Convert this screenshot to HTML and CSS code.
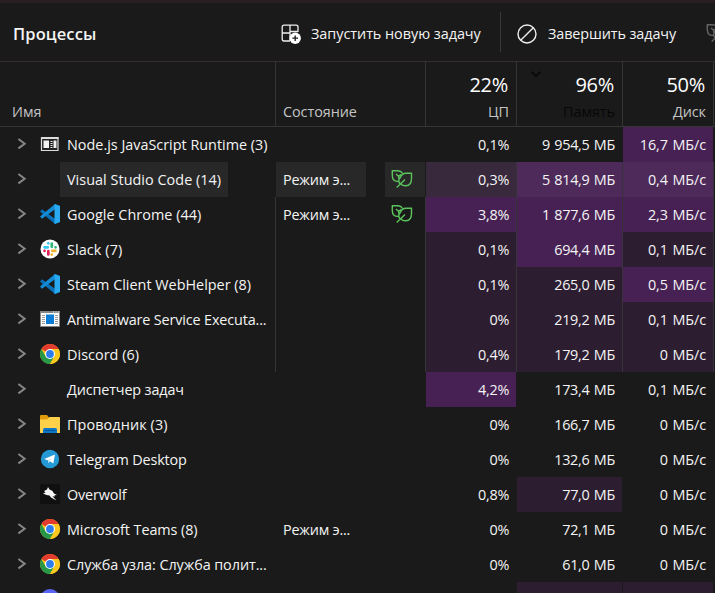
FILE: index.html
```html
<!DOCTYPE html>
<html lang="ru">
<head>
<meta charset="utf-8">
<title>Процессы</title>
<link rel="stylesheet" href="styles.css">
</head>
<body>
<svg class="defs" aria-hidden="true">
  <symbol id="chev" viewBox="0 0 10 12"><path d="M1.400 1 7.700 5.700 1.400 10.400" fill="none" stroke="#858585" stroke-width="2"/></symbol>
  <symbol id="leaf" viewBox="0 0 22 20"><path d="M8 12.300C3.500 13 1.300 10.500 1.300 6.500V1.700H6.500Q10 1.700 11.300 4.300M5 5 7.700 7.500V9.500M7.700 7.500 9.800 5.500M9 15C7 12.500 7.800 10 9.500 8.300 10.500 5.500 12.500 4.300 15 4.300H20.500V9.500C20.500 14 18.500 16.700 15 16.700Q12 17 9.800 15M5.700 18.600 14 10.500" fill="none" stroke="currentColor" stroke-width="1.400" stroke-linejoin="round"/></symbol>
  <symbol id="vscode" viewBox="0 0 20 20"><path d="M15 0 20 2V18L15 20 0 7.400 2 5.200 15 14.800Z" fill="#0870b8"/><path d="M15 0 0 12.600 2 14.800 15 5.200Z" fill="#128bd4"/><path d="M14.500 0 20 2V18L14.500 20Z" fill="#29a9f2"/></symbol>
  <symbol id="chrome" viewBox="0 0 20 20"><circle cx="10" cy="10" r="10" fill="#fcc81d"/><path d="M10 10 1.340 5A10 10 0 0 1 18.660 5Z" fill="#e33b2e"/><path d="M1.340 5A10 10 0 0 0 10 20L14.300 12.500 10 10 5.700 12.500Z" fill="#279847"/><path d="M10 5H18.660A10 10 0 0 1 10 20L14.300 12.500Z" fill="#fcc81d"/><circle cx="10" cy="10" r="5" fill="#fff"/><circle cx="10" cy="10" r="3.900" fill="#2f7ced"/></symbol>
  <symbol id="slack" viewBox="0 0 20 20"><circle cx="10" cy="10" r="9.500" fill="#fff"/><g fill="none" stroke-width="2.700" stroke-linecap="round"><path d="M4.500 8.300H7.800M8.300 4.300V4.400" stroke="#36c5f0"/><path d="M11.800 4.500V7.800M15.500 8.300H15.600" stroke="#2eb67d"/><path d="M15.500 11.800H12.200M11.800 15.500V15.600" stroke="#ecb22e"/><path d="M8.300 15.500V12.200M4.500 11.800H4.600" stroke="#e01e5a"/></g></symbol>
  <symbol id="node" viewBox="0 0 20 20"><path d="M1.500 3.500H18V16.500H1.500Z" fill="#222" stroke="#ddd" stroke-width="1.200"/><path d="M1 3H18.500V5H1Z" fill="#ddd"/><path d="M3.500 6.500H9V14H3.500Z" fill="#f2f2f2"/><path d="M10.500 7.500H12.500M10.500 9.500H12.500M10.500 11.500H12.500M10.500 13.500H12.500" stroke="#eee"/><path d="M13.500 6.500H16.500V14H13.500Z" fill="#eee"/></symbol>
  <symbol id="exe" viewBox="0 0 20 20"><path d="M.5 2.500H19.500V17.500H.5Z" fill="#fafafa" stroke="#858585"/><path d="M0 2H20V4H0Z" fill="#858585"/><path d="M13 3H14M15.500 3H16.500M18 3H19" stroke="#eee"/><path d="M6 5.500H14V15H6Z" fill="#0c7cd5"/><path d="M2 6.500H5M2 8.500H5M2 10.500H5M2 12.500H5M2 14.500H5M15 6.500H18M15 8.500H18M15 10.500H18M15 12.500H18M15 14.500H18" stroke="#9a9a9a"/></symbol>
  <symbol id="folder" viewBox="0 0 20 20"><path d="M0 2Q0 1 1 1H7L9 3.500V6H0Z" fill="#e09c0b"/><path d="M0 5.500H7L9.500 3H19Q20 3 20 4V19H0Z" fill="#ffd04a"/><path d="M3 19V15.500Q3 14 4.500 14H15.500Q17 14 17 15.500V19Z" fill="#0c78c9"/><path d="M5 16.500H15" stroke="#07528d"/></symbol>
  <symbol id="telegram" viewBox="0 0 20 20"><circle cx="10" cy="10" r="9.200" fill="#2499d5"/><path d="M4.200 10 15 5.600 13.300 14.500 10 12.300 8.300 14V11.500Z" fill="#fff"/><path d="M8.300 11.500 12.500 8 9.300 12 8.300 14Z" fill="#b9dced"/></symbol>
  <symbol id="wolf" viewBox="0 0 20 20"><path d="M0 0H20V20H0Z" fill="#101010"/><path d="M8 3 9.500 5.500 12.500 7 14 9.500 17 11 14.500 11.200 15 12.500 12.500 12.200 16.500 16.500 11 13.500 9.500 11.500 6.500 11 3 9.500 5.500 8.500 4 7 7 5.500Z" fill="#f5f5f5"/></symbol>
  <symbol id="blurple" viewBox="0 0 20 20"><circle cx="10" cy="10" r="10" fill="#5865f2"/></symbol>
</svg>
<header class="toolbar">
  <h1><span class="t">Процессы</span></h1>
  <div class="action run">
    <svg class="i-run" viewBox="0 0 20 20"><path d="M9 17H3Q1.200 17 1.200 15V3Q1.200 1.200 3 1.200H15Q17 1.200 17 3V8M9 1.200V17M1.200 9H9M9 7.500H17" fill="none" stroke="#eee" stroke-width="1.300"/><circle cx="14.200" cy="14.200" r="5.700" fill="#fff"/><path d="M11.400 14.200H17M14.200 11.400V17" stroke="#1a1a1a" stroke-width="1.300"/></svg>
    <span class="t">Запустить новую задачу</span>
  </div>
  <div class="action end">
    <svg class="i-end" viewBox="0 0 20 20"><circle cx="10" cy="10" r="9" fill="none" stroke="#eee" stroke-width="1.400"/><path d="M3.700 16.300 16.300 3.700" stroke="#eee" stroke-width="1.400"/></svg>
    <span class="t">Завершить задачу</span>
  </div>
  <svg class="i-eff"><use href="#leaf"/></svg>
</header>
<div class="row head">
  <div class="c name"><span class="t">Имя</span></div>
  <div class="c state"><span class="t">Состояние</span></div>
  <div class="c num"><b>22%</b><span class="t">ЦП</span></div>
  <div class="c num sorted"><svg class="i-sort" viewBox="0 0 10 6"><path d="M.7.700 5 5 9.300.700" fill="none" stroke="#050505" stroke-width="1.300"/></svg><b>96%</b><span class="t">Память</span></div>
  <div class="c num"><b>50%</b><span class="t">Диск</span></div>
</div>
<main>
  <div class="row"><div class="c name"><svg class="chev"><use href="#chev"/></svg><svg class="app"><use href="#node"/></svg><span class="t wide">Node.js JavaScript Runtime (3)</span></div><div class="c state"></div><div class="c num">0,1%</div><div class="c num">9 954,5 МБ</div><div class="c num disk hi">16,7 МБ/с</div></div>
  <div class="row lined hover"><div class="c name"><svg class="chev"><use href="#chev"/></svg><span class="app"></span><span class="t wider">Visual Studio Code (14)</span></div><div class="c state"><span class="mode">Режим э...</span><span class="eco"><svg><use href="#leaf"/></svg></span></div><div class="c num lo">0,3%</div><div class="c num hi">5 814,9 МБ</div><div class="c num disk hi">0,4 МБ/с</div></div>
  <div class="row lined"><div class="c name"><svg class="chev"><use href="#chev"/></svg><svg class="app"><use href="#vscode"/></svg><span class="t wider">Google Chrome (44)</span></div><div class="c state"><span class="mode">Режим э...</span><span class="eco"><svg><use href="#leaf"/></svg></span></div><div class="c num hi">3,8%</div><div class="c num hi">1 877,6 МБ</div><div class="c num disk hi">2,3 МБ/с</div></div>
  <div class="row lined"><div class="c name"><svg class="chev"><use href="#chev"/></svg><svg class="app"><use href="#slack"/></svg><span class="t widest">Slack (7)</span></div><div class="c state"></div><div class="c num lo">0,1%</div><div class="c num hi">694,4 МБ</div><div class="c num disk lo">0,1 МБ/с</div></div>
  <div class="row lined"><div class="c name"><svg class="chev"><use href="#chev"/></svg><svg class="app"><use href="#vscode"/></svg><span class="t wide">Steam Client WebHelper (8)</span></div><div class="c state"></div><div class="c num lo">0,1%</div><div class="c num lo">265,0 МБ</div><div class="c num disk hi">0,5 МБ/с</div></div>
  <div class="row lined"><div class="c name"><svg class="chev"><use href="#chev"/></svg><svg class="app"><use href="#exe"/></svg><span class="t snug">Antimalware Service Executa...</span></div><div class="c state"></div><div class="c num lo">0%</div><div class="c num lo">219,2 МБ</div><div class="c num disk lo">0,1 МБ/с</div></div>
  <div class="row lined"><div class="c name"><svg class="chev"><use href="#chev"/></svg><svg class="app"><use href="#chrome"/></svg><span class="t wider">Discord (6)</span></div><div class="c state"></div><div class="c num lo">0,4%</div><div class="c num lo">179,2 МБ</div><div class="c num disk lo">0 МБ/с</div></div>
  <div class="row"><div class="c name"><svg class="chev"><use href="#chev"/></svg><span class="app"></span><span class="t snug">Диспетчер задач</span></div><div class="c state"></div><div class="c num hi">4,2%</div><div class="c num">173,4 МБ</div><div class="c num disk">0,1 МБ/с</div></div>
  <div class="row"><div class="c name"><svg class="chev"><use href="#chev"/></svg><svg class="app"><use href="#folder"/></svg><span class="t widest">Проводник (3)</span></div><div class="c state"></div><div class="c num">0%</div><div class="c num">166,7 МБ</div><div class="c num disk">0 МБ/с</div></div>
  <div class="row"><div class="c name"><svg class="chev"><use href="#chev"/></svg><svg class="app"><use href="#telegram"/></svg><span class="t snug">Telegram Desktop</span></div><div class="c state"></div><div class="c num">0%</div><div class="c num">132,6 МБ</div><div class="c num disk">0 МБ/с</div></div>
  <div class="row"><div class="c name"><svg class="chev"><use href="#chev"/></svg><svg class="app"><use href="#wolf"/></svg><span class="t snug">Overwolf</span></div><div class="c state"></div><div class="c num">0,8%</div><div class="c num lo">77,0 МБ</div><div class="c num disk">0 МБ/с</div></div>
  <div class="row"><div class="c name"><svg class="chev"><use href="#chev"/></svg><svg class="app"><use href="#chrome"/></svg><span class="t mid">Microsoft Teams (8)</span></div><div class="c state"><span class="mode">Режим э...</span></div><div class="c num">0%</div><div class="c num">72,1 МБ</div><div class="c num disk">0 МБ/с</div></div>
  <div class="row"><div class="c name"><svg class="chev"><use href="#chev"/></svg><svg class="app"><use href="#chrome"/></svg><span class="t mid">Служба узла: Служба полит...</span></div><div class="c state"></div><div class="c num">0%</div><div class="c num">61,0 МБ</div><div class="c num disk">0 МБ/с</div></div>
  <div class="row"><div class="c name"><span class="chev"></span><svg class="app"><use href="#blurple"/></svg></div><div class="c state"></div><div class="c num"></div><div class="c num lo"></div><div class="c num disk lo"></div></div>
</main>
</body>
</html>
```
FILE: styles.css
```css
* { box-sizing: border-box; }
body {
  margin: 0;
  width: 715px;
  height: 593px;
  overflow: hidden;
  display: flex;
  flex-direction: column;
  background: #1a1a1a;
  color: #f4f4f4;
  font: 14.4px/20px "Open Sans", "Noto Sans", sans-serif;
  letter-spacing: -0.3px;
  white-space: nowrap;
}
.defs { display: none; }
svg { display: block; flex: none; }

.toolbar {
  height: 62px;
  flex: none;
  display: flex;
  align-items: center;
  border-top: 3px solid #281e24;
  border-bottom: 1px solid #352d30;
  padding-left: 13px;
  overflow: hidden;
}
h1 { margin: 0; width: 268px; flex: none; font-size: 16.5px; font-weight: 600; letter-spacing: 0.1px; padding-top: 3px; }
.action { display: flex; align-items: center; height: 40px; flex: none; padding-top: 3px; letter-spacing: -0.03px; }
.run { width: 220px; border-right: 1px solid #383838; gap: 10px; }
.end { width: 205px; padding-left: 16px; gap: 11px; letter-spacing: -0.1px; }
.i-run, .i-end { width: 20px; height: 20px; }
.i-eff { width: 22px; height: 20px; color: #666; margin-top: 2px; }

.row {
  display: grid;
  grid-template-columns: 276px 150px 91px 106px 91px 1fr;
  height: 35px;
  flex: none;
}
.c {
  display: flex;
  align-items: center;
  border-right: 1px solid #1a1a1a;
  min-width: 0;
}
.lined .c { border-right-color: #38323a; }
.num { justify-content: flex-end; padding-right: 7px; background-clip: padding-box; }
.lo { background-color: #2c1d30; }
.hi { background-color: #472154; }
.hover .lo { background-color: #38293c; }
.hover .hi { background-color: #4e2a5b; }
.hover .name, .hover .state { border-right-color: #1a1a1a; }

.head {
  height: 65px;
  border-bottom: 1px solid #353535;
}
.head .c { border-right-color: #343434; align-items: flex-end; padding-bottom: 4px; color: #c4c4c4; letter-spacing: -0.05px; }
.head .name { padding-left: 12px; }
.head .state { padding-left: 7px; }
.head .num { flex-direction: column; justify-content: flex-end; gap: 5px; position: relative; }
.head b { font-size: 20px; line-height: 24px; font-weight: 400; color: #fff; letter-spacing: -0.3px; margin-right: 1px; }
.head .sorted { color: #070707; }
.i-sort { position: absolute; left: 14px; top: 9px; width: 10px; height: 6px; }

.chev { width: 10px; height: 12px; margin: 0 0 1px 17px; }
.app { width: 20px; height: 20px; margin: 0 0 1px 13px; flex: none; }
.row .name .t { height: 35px; line-height: 36px; padding: 0 7px; }
.head .name .t { height: auto; line-height: 20px; padding: 0; }
.t.snug { letter-spacing: -0.14px; }
.t.mid { letter-spacing: -0.07px; }
.t.wide { letter-spacing: 0; }
.t.wider { letter-spacing: 0.04px; }
.t.widest { letter-spacing: 0.1px; }
.hover .name .t { background: #282828; }
.mode { width: 90px; height: 35px; line-height: 36px; padding-left: 7px; letter-spacing: -0.2px; }
.eco { width: 40px; height: 35px; margin-left: 19px; padding: 7px 0 0 6px; color: #5bc35b; }
.eco svg { width: 22px; height: 20px; }
.hover .mode, .hover .eco { background: #282828; }
main .num { padding-top: 1px; word-spacing: 1px; }
main .disk { letter-spacing: -0.1px; }
```
